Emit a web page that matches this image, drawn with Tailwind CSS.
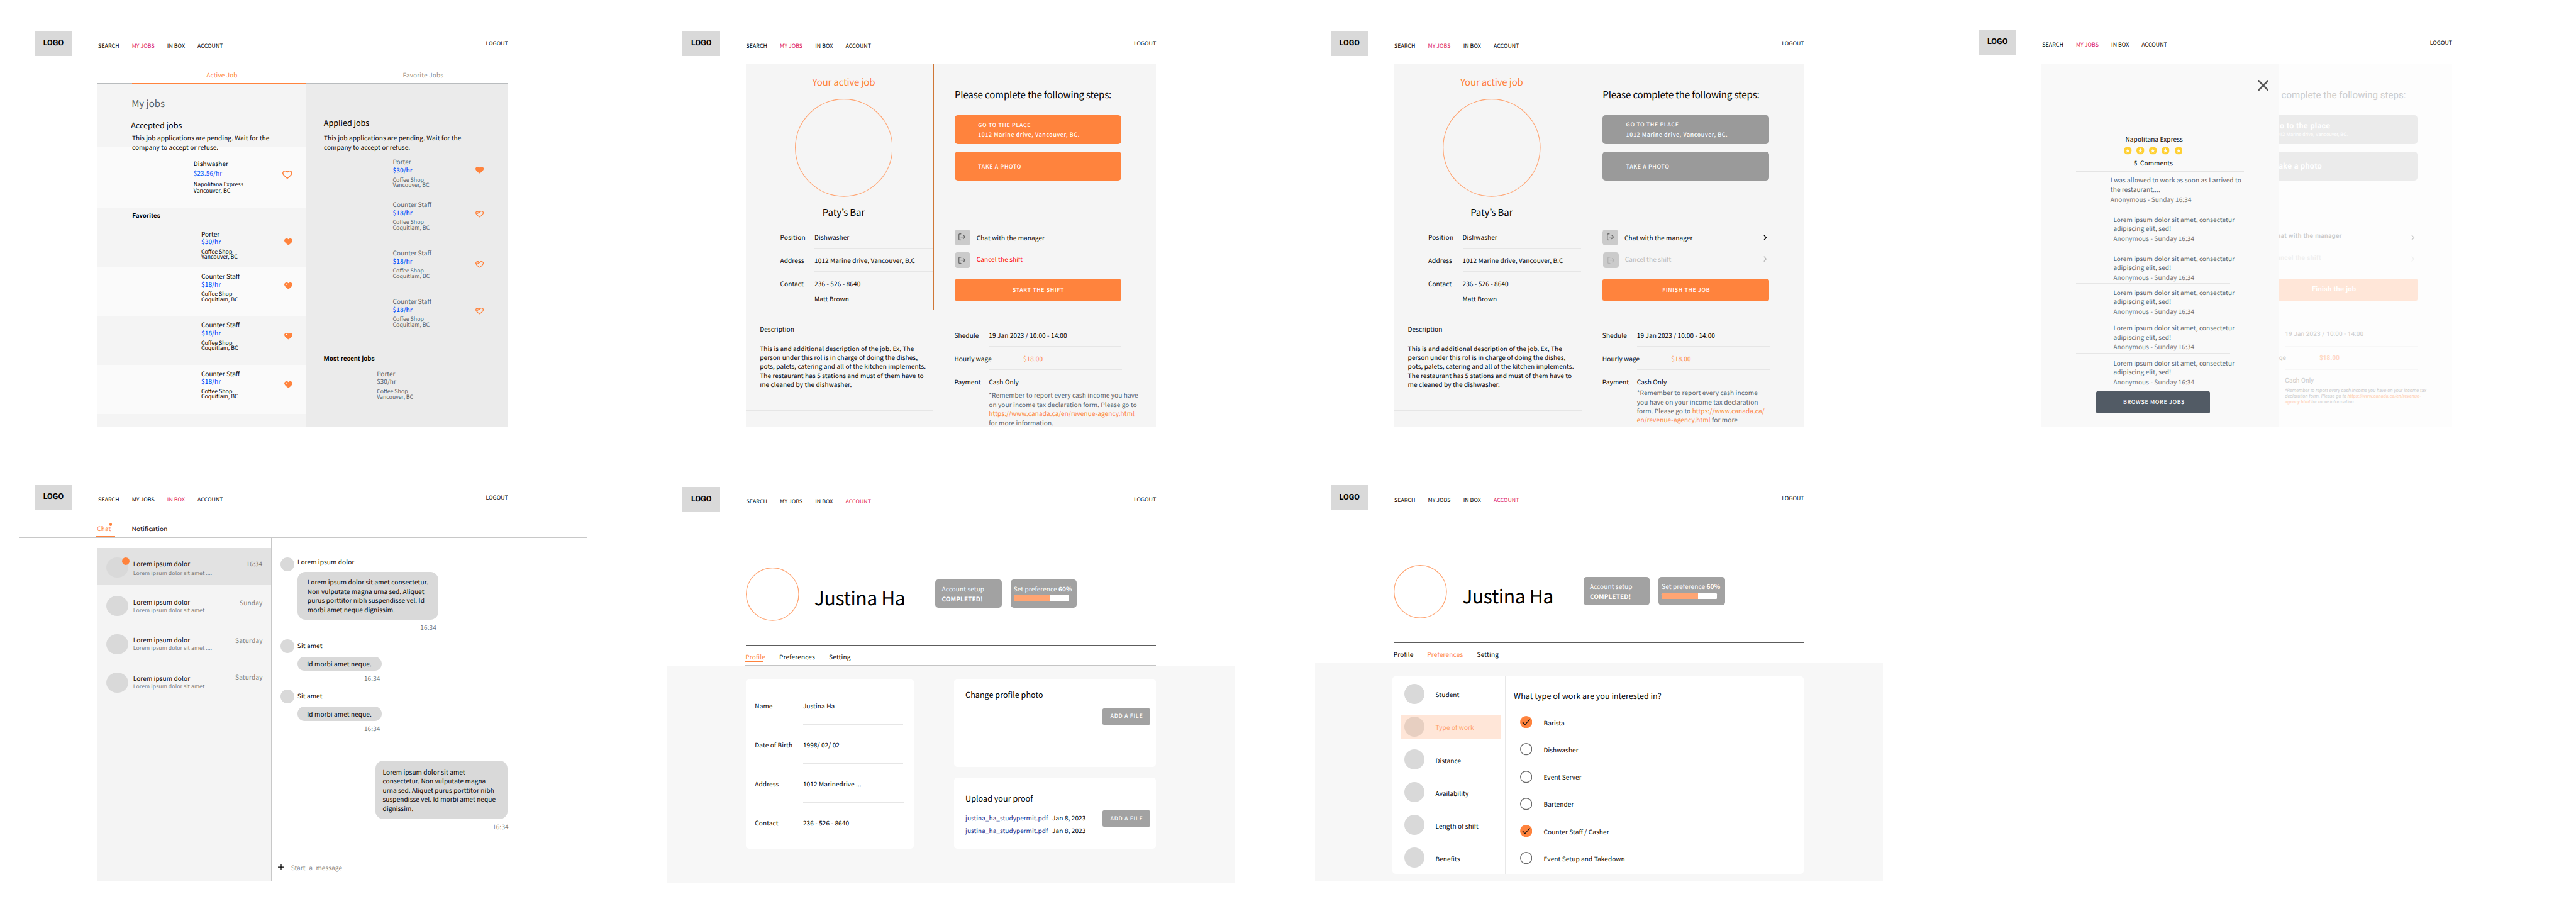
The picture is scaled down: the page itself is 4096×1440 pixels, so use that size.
<!DOCTYPE html>
<html lang="en">
<head>
<meta charset="utf-8">
<title>Job board wireframes</title>
<script src="https://cdn.jsdelivr.net/npm/@tailwindcss/browser@4"></script>
</head>
<body class="bg-white overflow-hidden">

<!-- Shared icons -->
<svg class="hidden">
  <symbol id="heart" viewBox="2 3 20 18.35" preserveAspectRatio="none"><path fill="currentColor" d="M12 21.35l-1.45-1.32C5.4 15.36 2 12.28 2 8.5 2 5.42 4.42 3 7.5 3c1.74 0 3.41.81 4.5 2.09C13.09 3.81 14.76 3 16.5 3 19.58 3 22 5.42 22 8.5c0 3.78-3.4 6.86-8.55 11.54L12 21.35z"/></symbol>
  <symbol id="heart-line" viewBox="2 3 20 18.35" preserveAspectRatio="none"><path fill="currentColor" d="M16.5 3c-1.74 0-3.41.81-4.5 2.09C10.91 3.81 9.24 3 7.5 3 4.42 3 2 5.42 2 8.5c0 3.78 3.4 6.86 8.55 11.54L12 21.35l1.45-1.32C18.6 15.36 22 12.28 22 8.5 22 5.42 19.58 3 16.5 3zm-4.4 15.55l-.1.1-.1-.1C7.14 14.24 4 11.39 4 8.5 4 6.5 5.5 5 7.5 5c1.54 0 3.04.99 3.57 2.36h1.87C13.46 5.99 14.96 5 16.5 5c2 0 3.5 1.5 3.5 3.5 0 2.89-3.14 5.74-7.9 10.05z"/></symbol>
  <symbol id="heart-notch" viewBox="2 3 20 18.35" preserveAspectRatio="none"><use href="#heart" x="2" y="3" width="20" height="18.35"/><path fill="#fff" d="M6.2 10.2V7.2a1.3 1.3 0 0 1 1.3-1.3h1.6l-.6 2z"/></symbol>
  <symbol id="heart-slash" viewBox="2 3 20 18.35" preserveAspectRatio="none"><use href="#heart-line" x="2" y="3" width="20" height="18.35"/><path fill="none" stroke="currentColor" stroke-width="2" d="M5 11.5L14.5 5.3M4.6 10.4L6.6 4.8M5 5.5l7 1"/></symbol>
  <symbol id="exit" viewBox="0 0 18 18"><path fill="none" stroke="currentColor" stroke-width="2.1" stroke-linecap="round" stroke-linejoin="round" d="M6.2 1.2H3.2a2 2 0 0 0-2 2v11.6a2 2 0 0 0 2 2h3M6.6 9h10M12.4 4.4L17 9l-4.6 4.6"/></symbol>
  <symbol id="chevron" viewBox="0 0 9 15"><path fill="none" stroke="currentColor" stroke-width="2.2" d="M1.2 1l5.8 6.5-5.8 6.5"/></symbol>
  <symbol id="star" viewBox="0 0 20 20"><circle cx="10" cy="10" r="10" fill="#ffd033"/><path fill="#fafafa" d="M10 3.9l1.5 4.3 4.500.1-3.600 2.700 1.300 4.400-3.700-2.600-3.700 2.600 1.300-4.400L4 8.300l4.500-.1z"/></symbol>
  <symbol id="radio" viewBox="0 0 31 31"><circle cx="15.5" cy="15.5" r="14.4" fill="none" stroke="#6b6b6b" stroke-width="2.2"/></symbol>
  <symbol id="tick" viewBox="0 0 31 31"><circle cx="15.5" cy="15.5" r="15.5" fill="#ff833d"/><path fill="none" stroke="#111" stroke-width="2" d="M6.5 15.5l6 6.500L24.500 8.500"/></symbol>
</svg>

<div class="[zoom:0.62755] w-[6527px] h-[2295px] overflow-hidden bg-white text-black font-['Noto_Sans_CJK_JP','Noto_Sans',sans-serif] text-[16px] leading-[23px] tracking-[0.16px] whitespace-nowrap [text-rendering:geometricPrecision] [font-feature-settings:'liga']">

<div class="flex gap-[202px] pl-[47.300px] pt-[58px]">

  <!-- My jobs -->
  <section class="w-[1440px] h-[1024px] shrink-0">
    <header class="flex h-[113px] w-[1240px] items-start pl-10 pt-5 text-[14px] leading-5 tracking-[0.060px]">
      <div class="flex h-16 w-24 items-center justify-center bg-[#d9d9d9] font-['Roboto'] text-[20px] font-bold">LOGO</div>
      <nav class="ml-[65.500px] mt-7 flex gap-8"><a>SEARCH</a><a class="text-[#dc1a60]">MY JOBS</a><a>IN BOX</a><a>ACCOUNT</a></nav>
      <a class="ml-auto mt-[23px]">LOGOUT</a>
    </header>
    <div class="ml-[200px] flex h-[41px] w-[1040px] border-b border-[#b9bcbe]">
      <div class="ml-[88px] h-[41px] w-[440px] border-b-2 border-[#ff833d] pl-[188px] pt-[7px] text-[#ff833d]">Active Job</div>
      <div class="pl-[245.500px] pt-[7px] tracking-[0.260px] text-[#8c8c8c]">Favorite Jobs</div>
    </div>
    <div class="ml-[200px] flex h-[870px] w-[1040px]">
      <div class="w-[528px] bg-[#f4f4f4]">
        <div class="h-[159px] pt-[33px]">
          <h1 class="pl-[86px] text-[24px] leading-[35px] tracking-normal text-[#525c66]">My jobs</h1>
          <h2 class="pl-[84.500px] pt-[23px] text-[20px] leading-[29px] tracking-normal">Accepted jobs</h2>
          <p class="pl-[87.300px] pt-[6px]">This job applications are pending. Wait for the<br>company to accept or refuse.</p>
        </div>
        <div class="h-[157px] bg-[#fafafa] pt-[30px]">
          <div class="flex pl-[243.200px]">
            <div class="w-[224.500px]">
              <div class="leading-6">Dishwasher</div>
              <div class="leading-6 text-[#0a58fa]">$23.56/hr</div>
              <div class="mt-[10px] text-[14px] leading-4 tracking-[0.070px]">Napolitana Express<br>Vancouver, BC</div>
            </div>
            <svg class="mt-[30.500px] h-[21.500px] w-[25px] text-[#ff833d]"><use href="#heart-line"/></svg>
          </div>
          <div class="ml-[88px] mt-[25px] w-[423px] border-b border-[#dfdfdf]"></div>
        </div>
        <div class="h-[148px] pt-[10px]">
          <h3 class="pl-[88px] font-['Roboto'] font-bold leading-5 tracking-[0.580px]">Favorites</h3>
          <div class="flex pl-[262.600px] pt-[24.600px]">
            <div class="w-[210px] leading-5 tracking-normal">Porter<div class="font-medium text-[#0a58fa]">$30/hr</div><div class="mt-2 text-[14px] leading-[14px]">Coffee Shop<br>Vancouver, BC</div></div>
            <svg class="mt-[22px] h-[17.300px] w-[21px] text-[#ff833d]"><use href="#heart"/></svg>
          </div>
        </div>
        <div class="flex h-[124px] bg-[#fafafa] pl-[262.600px] pt-[14.300px]">
          <div class="w-[210px] leading-5 tracking-normal">Counter Staff<div class="font-medium text-[#0a58fa]">$18/hr</div><div class="mt-2 text-[14px] leading-[14px]">Coffee Shop<br>Coquitlam, BC</div></div>
          <svg class="mt-[25.500px] h-[17.300px] w-[21px] text-[#ff833d]"><use href="#heart-notch"/></svg>
        </div>
        <div class="flex h-[125px] pl-[262.600px] pt-[13.400px]">
          <div class="w-[210px] leading-5 tracking-normal">Counter Staff<div class="font-medium text-[#0a58fa]">$18/hr</div><div class="mt-2 text-[14px] leading-[14px]">Coffee Shop<br>Coquitlam, BC</div></div>
          <svg class="mt-[30px] h-[17.300px] w-[21px] text-[#ff833d]"><use href="#heart-notch"/></svg>
        </div>
        <div class="flex h-[124px] bg-[#fafafa] pl-[262.600px] pt-[11.400px]">
          <div class="w-[210px] leading-5 tracking-normal">Counter Staff<div class="font-medium text-[#0a58fa]">$18/hr</div><div class="mt-2 text-[14px] leading-[14px]">Coffee Shop<br>Coquitlam, BC</div></div>
          <svg class="mt-[30px] h-[17.300px] w-[21px] text-[#ff833d]"><use href="#heart-notch"/></svg>
        </div>
      </div>
      <div class="w-[512px] bg-[#ebebeb] pt-[84.500px]">
        <h2 class="pl-[45px] text-[20px] leading-[29px] tracking-normal">Applied jobs</h2>
        <p class="pl-[45.300px] pt-[13px]">This job applications are pending. Wait for the<br>company to accept or refuse.</p>
        <div class="flex h-[123.800px] pl-[219.900px] pt-[16.200px]">
          <div class="w-[209.800px] leading-5 tracking-normal text-[#555f69]">Porter<div class="font-medium text-[#0a58fa]">$30/hr</div><div class="mt-2 text-[14px] leading-[14px]">Coffee Shop<br>Vancouver, BC</div></div>
          <svg class="mt-[22.300px] h-[17.300px] w-[21px] text-[#ff833d]"><use href="#heart"/></svg>
        </div>
        <div class="flex h-[123px] pl-[219.900px]">
          <div class="w-[209.800px] leading-5 tracking-normal text-[#555f69]">Counter Staff<div class="font-medium text-[#0a58fa]">$18/hr</div><div class="mt-2 text-[14px] leading-[14px]">Coffee Shop<br>Coquitlam, BC</div></div>
          <svg class="mt-[25.500px] h-[17.300px] w-[21px] text-[#ff833d]"><use href="#heart-slash"/></svg>
        </div>
        <div class="flex h-[123px] pl-[219.900px]">
          <div class="w-[209.800px] leading-5 tracking-normal text-[#555f69]">Counter Staff<div class="font-medium text-[#0a58fa]">$18/hr</div><div class="mt-2 text-[14px] leading-[14px]">Coffee Shop<br>Coquitlam, BC</div></div>
          <svg class="mt-[30.500px] h-[17.300px] w-[21px] text-[#ff833d]"><use href="#heart-slash"/></svg>
        </div>
        <div class="flex h-[146.600px] pl-[219.900px]">
          <div class="w-[209.800px] leading-5 tracking-normal text-[#555f69]">Counter Staff<div class="font-medium text-[#0a58fa]">$18/hr</div><div class="mt-2 text-[14px] leading-[14px]">Coffee Shop<br>Coquitlam, BC</div></div>
          <svg class="mt-[25.500px] h-[17.300px] w-[21px] text-[#ff833d]"><use href="#heart-slash"/></svg>
        </div>
        <h3 class="pl-[45px] font-['Roboto'] font-bold leading-5 tracking-[0.560px]">Most recent jobs</h3>
        <div class="pl-[179.600px] pt-4 leading-5 tracking-normal text-[#555f69]">Porter<div>$30/hr</div><div class="mt-2 text-[14px] leading-[14px]">Coffee Shop<br>Vancouver, BC</div></div>
      </div>
    </div>
  </section>

  <!-- Active job: before the shift -->
  <section class="w-[1440px] h-[1024px] shrink-0">
    <header class="flex h-[104px] w-[1240px] items-start pl-10 pt-5 text-[14px] leading-5 tracking-[0.060px]">
      <div class="flex h-16 w-24 items-center justify-center bg-[#d9d9d9] font-['Roboto'] text-[20px] font-bold">LOGO</div>
      <nav class="ml-[65.500px] mt-7 flex gap-8"><a>SEARCH</a><a class="text-[#dc1a60]">MY JOBS</a><a>IN BOX</a><a>ACCOUNT</a></nav>
      <a class="ml-auto mt-[23px]">LOGOUT</a>
    </header>
    <div class="ml-[200px] h-[920px] w-[1040px] overflow-hidden bg-[#f5f5f5]">
      <div class="flex h-[408px] border-b border-[#e6e6e6]">
        <div class="-mb-px flex w-[477px] flex-col items-center border-r-2 border-[#cf7636] pl-[21.500px] pt-[28.500px]">
          <h1 class="text-[24px] leading-[35px] tracking-[-0.300px] text-[#ff833d]">Your active job</h1>
          <svg class="mt-[24.800px] size-[248px]" viewBox="0 0 248 248"><circle cx="124" cy="124" r="123" fill="none" stroke="#ffa573" stroke-width="2"/></svg>
          <div class="mt-[23.500px] text-[24px] leading-[35px] tracking-[-0.200px]">Paty’s Bar</div>
        </div>
        <div class="pl-[52.600px] pt-[61.600px]">
          <h2 class="text-[24px] leading-[35px] tracking-[-0.240px]">Please complete the following steps:</h2>
          <div class="-ml-[0.600px] mt-[33.600px] h-[72px] w-[423px] rounded-lg bg-[#ff833d] pl-[60px] pt-[14.500px] text-[14px] font-medium leading-[23px] tracking-[1.020px] text-white">GO TO THE PLACE<br>1012 Marine drive, Vancouver, BC.</div>
          <div class="-ml-[0.600px] mt-[20.600px] h-[72px] w-[423px] rounded-lg bg-[#ff833d] pl-[60px] pt-[27.500px] text-[14px] font-medium leading-5 tracking-[1.020px] text-white">TAKE A PHOTO</div>
        </div>
      </div>
      <div class="flex h-[216px] border-b border-[#e4e4e4]">
        <div class="w-[477px] border-r-2 border-[#cf7636] pl-[87.500px]">
          <div class="flex"><div class="w-[87px] pt-5 tracking-[0.400px]">Position</div><div class="h-[59px] grow border-b border-[#e6e6e6] pt-5">Dishwasher</div></div>
          <div class="flex"><div class="w-[87px] pt-5">Address</div><div class="h-[59px] grow border-b border-[#e6e6e6] pt-5">1012 Marine drive, Vancouver, B.C</div></div>
          <div class="flex"><div class="w-[87px] pt-5">Contact</div><div class="pt-5">236 - 526 - 8640<div class="pt-[15.500px]">Matt Brown</div></div></div>
        </div>
        <div class="pl-[52px] pt-[11px]">
          <div class="flex items-center gap-4"><div class="flex size-10 items-center justify-center rounded-[7px] bg-[#cbcbcb] text-[#696969]"><svg class="size-[18px]"><use href="#exit"/></svg></div><div class="pt-[2.500px]">Chat with the manager</div></div>
          <div class="mt-[17.500px] flex items-center gap-4"><div class="flex size-10 items-center justify-center rounded-[7px] bg-[#cbcbcb] text-[#696969]"><svg class="size-[18px]"><use href="#exit"/></svg></div><div class="pb-[2px] text-[#ff0000]">Cancel the shift</div></div>
          <div class="mt-[28.700px] flex h-[55px] w-[423px] items-center justify-center rounded bg-[#ff833d] pl-0.5 text-[14px] font-medium leading-5 tracking-[1.020px] text-white">START THE SHIFT</div>
        </div>
      </div>
      <div class="flex h-[296px]">
        <div class="w-[477px]">
          <div class="pl-9 pt-[37px]">Description<p class="pt-[25px]">This is and additional description of the job. Ex, The<br>person under this rol is in charge of doing the dishes,<br>pots, palets, catering and all of the kitchen implements.<br>The restaurant has 5 stations and must of them have to<br>me cleaned by the dishwasher.</p></div>
          <div class="mt-[53px] w-[476px] border-b border-[#e6e6e6]"></div>
        </div>
        <div class="pl-[51.800px]">
          <div class="flex"><div class="w-[87.500px] pt-[52.600px]">Shedule</div><div class="h-[92px] w-[336px] border-b border-[#e6e6e6] pt-[52.600px]">19 Jan 2023 / 10:00 - 14:00</div></div>
          <div class="flex"><div class="w-[87.500px] pt-[19.700px]">Hourly wage</div><div class="h-[59px] w-[337px] border-b border-[#e6e6e6] pl-[87px] pt-[19.700px] text-[#ff833d]">$18.00</div></div>
          <div class="flex"><div class="w-[87.500px] pt-[19.300px]">Payment</div><div class="pt-[19.300px]">Cash Only<p class="pt-[10.800px] text-[#555f69]">*Remember to report every cash income you have<br>on your income tax declaration form. Please go to<br><span class="text-[#ff833d]">https://www.canada.ca/en/revenue-agency.html</span><br>for more information.</p></div></div>
        </div>
      </div>
    </div>
  </section>

  <!-- Active job: shift in progress -->
  <section class="w-[1440px] h-[1024px] shrink-0">
    <header class="flex h-[104px] w-[1240px] items-start pl-10 pt-5 text-[14px] leading-5 tracking-[0.060px]">
      <div class="flex h-16 w-24 items-center justify-center bg-[#d9d9d9] font-['Roboto'] text-[20px] font-bold">LOGO</div>
      <nav class="ml-[65.500px] mt-7 flex gap-8"><a>SEARCH</a><a class="text-[#dc1a60]">MY JOBS</a><a>IN BOX</a><a>ACCOUNT</a></nav>
      <a class="ml-auto mt-[23px]">LOGOUT</a>
    </header>
    <div class="ml-[200px] h-[920px] w-[1040px] overflow-hidden bg-[#f5f5f5]">
      <div class="flex h-[408px] border-b border-[#e6e6e6]">
        <div class="flex w-[477px] flex-col items-center pl-[19.500px] pt-[28.500px]">
          <h1 class="text-[24px] leading-[35px] tracking-[-0.300px] text-[#ff833d]">Your active job</h1>
          <svg class="mt-[24.800px] size-[248px]" viewBox="0 0 248 248"><circle cx="124" cy="124" r="123" fill="none" stroke="#ffa573" stroke-width="2"/></svg>
          <div class="mt-[23.500px] text-[24px] leading-[35px] tracking-[-0.200px]">Paty’s Bar</div>
        </div>
        <div class="pl-[52.600px] pt-[61.600px]">
          <h2 class="text-[24px] leading-[35px] tracking-[-0.240px]">Please complete the following steps:</h2>
          <div class="-ml-[0.600px] mt-[33.600px] h-[72px] w-[423px] rounded-lg bg-[#9a9a9a] pl-[60px] pt-[10.800px] text-[14px] font-medium leading-[25px] tracking-[1.020px] text-white">GO TO THE PLACE<br>1012 Marine drive, Vancouver, BC.</div>
          <div class="-ml-[0.600px] mt-[20.600px] h-[72px] w-[423px] rounded-lg bg-[#9a9a9a] pl-[60px] pt-[27.500px] text-[14px] font-medium leading-5 tracking-[1.020px] text-white">TAKE A PHOTO</div>
        </div>
      </div>
      <div class="flex h-[216px] border-b border-[#e4e4e4]">
        <div class="w-[477px] pl-[87.500px] pr-[2px]">
          <div class="flex"><div class="w-[87px] pt-5 tracking-[0.400px]">Position</div><div class="h-[59px] grow border-b border-[#e6e6e6] pt-5">Dishwasher</div></div>
          <div class="flex"><div class="w-[87px] pt-5">Address</div><div class="h-[59px] grow border-b border-[#e6e6e6] pt-5">1012 Marine drive, Vancouver, B.C</div></div>
          <div class="flex"><div class="w-[87px] pt-5">Contact</div><div class="pt-5">236 - 526 - 8640<div class="pt-[15.500px]">Matt Brown</div></div></div>
        </div>
        <div class="w-[475px] pl-[52px] pt-[11px]">
          <div class="flex items-center"><div class="flex size-10 items-center justify-center rounded-[7px] bg-[#cbcbcb] text-[#696969]"><svg class="size-[18px]"><use href="#exit"/></svg></div><div class="ml-4 pt-[2.500px]">Chat with the manager</div><svg class="ml-auto mr-[5.500px] mt-0.5 h-[15px] w-[9px]"><use href="#chevron"/></svg></div>
          <div class="ml-px mt-[17.500px] flex items-center"><div class="flex size-10 items-center justify-center rounded-[7px] bg-[#cbcbcb] text-[#b2b2b2]"><svg class="size-[18px]"><use href="#exit"/></svg></div><div class="ml-4 pb-[2px] text-[#b8b8b8]">Cancel the shift</div><svg class="mb-1 ml-auto mr-[6.500px] h-[15px] w-[9px] text-[#b8b8b8]"><use href="#chevron"/></svg></div>
          <div class="mt-[28.700px] flex h-[55px] w-[423px] items-center justify-center rounded bg-[#ff833d] pl-0.5 text-[14px] font-medium leading-5 tracking-[1.020px] text-white">FINISH THE JOB</div>
        </div>
      </div>
      <div class="flex h-[296px]">
        <div class="w-[477px]">
          <div class="pl-9 pt-[37px]">Description<p class="pt-[25px]">This is and additional description of the job. Ex, The<br>person under this rol is in charge of doing the dishes,<br>pots, palets, catering and all of the kitchen implements.<br>The restaurant has 5 stations and must of them have to<br>me cleaned by the dishwasher.</p></div>
          <div class="mt-[53px] w-[476px] border-b border-[#e6e6e6]"></div>
        </div>
        <div class="pl-[51.800px]">
          <div class="flex"><div class="w-[87.500px] pt-[52.600px]">Shedule</div><div class="h-[92px] w-[336px] border-b border-[#e6e6e6] pt-[52.600px]">19 Jan 2023 / 10:00 - 14:00</div></div>
          <div class="flex"><div class="w-[87.500px] pt-[19.700px]">Hourly wage</div><div class="h-[59px] w-[337px] border-b border-[#e6e6e6] pl-[87px] pt-[19.700px] text-[#ff833d]">$18.00</div></div>
          <div class="flex"><div class="w-[87.500px] pt-[19.300px]">Payment</div><div class="pt-[19.300px]">Cash Only<p class="pt-[4.100px] text-[#555f69]">*Remember to report every cash income<br>you have on your income tax declaration<br>form. Please go to <span class="text-[#ff833d]">https://www.canada.ca/</span><br><span class="text-[#ff833d]">en/revenue-agency.html</span> for more<br>information.</p></div></div>
        </div>
      </div>
    </div>
  </section>

  <!-- Reviews dialog over the faded active job -->
  <section class="w-[1440px] h-[1024px] shrink-0">
    <header class="flex h-[104px] w-[1240px] items-start pl-10 pt-[18px] text-[14px] leading-5 tracking-[0.060px]">
      <div class="flex h-16 w-24 items-center justify-center bg-[#d9d9d9] font-['Roboto'] text-[20px] font-bold">LOGO</div>
      <nav class="ml-[65.500px] mt-7 flex gap-8"><a>SEARCH</a><a class="text-[#dc1a60]">MY JOBS</a><a>IN BOX</a><a>ACCOUNT</a></nav>
      <a class="ml-auto mt-[23px]">LOGOUT</a>
    </header>
    <div class="relative ml-[200px] h-[920px] w-[1040px] bg-[#fdfdfd]">
      <div class="font-['Roboto'] text-[#cccccc]">
        <div class="h-[408px] border-b border-[#f9f9f9] pl-[529px] pt-[62px]">
          <h2 class="text-[24px] leading-[35px] tracking-[0.060px]">Please complete the following steps:</h2>
          <div class="mt-[33.200px] h-[72px] w-[423px] rounded-lg bg-[#ebebeb] pl-[60px] pt-[15px] text-[20px] font-bold leading-6 tracking-[0.500px] text-white">Go to the place<div class="text-[12px] font-normal leading-[18px] tracking-[0.200px] underline">1012 Marine drive, Vancouver, BC.</div></div>
          <div class="mt-[20.600px] h-[72px] w-[423px] rounded-lg bg-[#ebebeb] pl-[60px] pt-[25px] text-[20px] font-bold leading-6 tracking-[0.500px] text-white">Take a photo</div>
        </div>
        <div class="h-[216px] w-[952px] pl-[529px] pt-[18.500px] font-bold tracking-[0.650px]">
          <div class="flex items-center justify-between pl-[56px] pr-[6px]"><span>Chat with the manager</span><svg class="mt-[3px] h-[15px] w-[9px]"><use href="#chevron"/></svg></div>
          <div class="mt-[32.500px] flex items-center justify-between pl-[56px] pr-[7px] text-[#f0f0f0]"><span>Cancel the shift</span><svg class="h-[15px] w-[9px]"><use href="#chevron"/></svg></div>
          <div class="mt-[39.500px] flex h-[55px] w-[423px] items-center justify-center rounded bg-[#ffe6d8] text-[18px] tracking-[0.250px] text-white">Finish the job</div>
        </div>
        <div class="pl-[529px]">
          <div class="flex"><div class="w-[87.500px] pt-[51px]">Shedule</div><div class="h-[92px] w-[336px] border-b border-[#f7f7f7] pt-[51px]">19 Jan 2023 / 10:00 - 14:00</div></div>
          <div class="flex"><div class="w-[87.500px] pt-[19px]">Hourly wage</div><div class="h-[59px] w-[337px] border-b border-[#f7f7f7] pl-[87px] pt-[19px] font-bold text-[#ffd9c5]">$18.00</div></div>
          <div class="flex"><div class="w-[87.500px] pt-[17px]">Payment</div><div class="pt-[17px]">Cash Only<p class="pt-[6.500px] text-[12px] italic leading-[14.200px] tracking-normal">*Remember to report every cash income you have on your income tax<br>declaration form. Please go to <b class="text-[#ffd9c5]">https://www.canada.ca/en/revenue-<br>agency.html</b> for more information.</p></div></div>
        </div>
      </div>

      <div class="absolute left-0 top-[-1.700px] h-[919.500px] w-[599.500px] bg-[#f9f9f9]">
        <div class="flex justify-end pr-[24.800px] pt-[42.700px]"><svg class="size-[28px]" viewBox="0 0 28 28"><path d="M2 2l24 24M26 2L2 26" stroke="#575757" stroke-width="4.200" stroke-linecap="square"/></svg></div>
        <div class="mt-[110px] pl-[212px]">Napolitana Express</div>
        <div class="ml-[208.500px] mt-[7.900px] flex gap-3">
          <svg class="size-5"><use href="#star"/></svg><svg class="size-5"><use href="#star"/></svg><svg class="size-5"><use href="#star"/></svg><svg class="size-5"><use href="#star"/></svg><svg class="size-5"><use href="#star"/></svg>
        </div>
        <div class="mt-[10px] whitespace-pre pl-[233px]">5  Comments</div>
        <div class="ml-[86.700px] w-[425px] border-b border-[#e4e4e4] pt-[8px]"></div>
        <div class="h-[91px] pl-[174.300px] pt-[11px] text-[#555f69]">I was allowed to work as soon as I arrived to<br>the restaurant....<div class="pt-[2px] text-[#757575]">Anonymous - Sunday 16:34</div></div>
        <div class="ml-[86.700px] w-[390px] border-b border-[#e6e6e6]"></div>
        <div class="h-[103px] pl-[181.600px] pt-[18px] text-[#555f69]">Lorem ipsum dolor sit amet, consectetur<br>adipiscing elit, sed!<div class="pt-[2px] text-[#757575]">Anonymous - Sunday 16:34</div></div>
        <div class="ml-[86.700px] w-[390px] border-b border-[#e6e6e6]"></div>
        <div class="h-[85.500px] pl-[181.600px] pt-[11.500px] text-[#555f69]">Lorem ipsum dolor sit amet, consectetur<br>adipiscing elit, sed!<div class="pt-[2px] text-[#757575]">Anonymous - Sunday 16:34</div></div>
        <div class="ml-[86.700px] w-[390px] border-b border-[#e6e6e6]"></div>
        <div class="h-[86px] pl-[181.600px] pt-[10.700px] text-[#555f69]">Lorem ipsum dolor sit amet, consectetur<br>adipiscing elit, sed!<div class="pt-[2px] text-[#757575]">Anonymous - Sunday 16:34</div></div>
        <div class="ml-[86.700px] w-[390px] border-b border-[#e6e6e6]"></div>
        <div class="h-[88px] pl-[181.600px] pt-[13px] text-[#555f69]">Lorem ipsum dolor sit amet, consectetur<br>adipiscing elit, sed!<div class="pt-[2px] text-[#757575]">Anonymous - Sunday 16:34</div></div>
        <div class="ml-[86.700px] w-[390px] border-b border-[#e6e6e6]"></div>
        <div class="h-[95.500px] pl-[181.600px] pt-[12.500px] text-[#555f69]">Lorem ipsum dolor sit amet, consectetur<br>adipiscing elit, sed!<div class="pt-[2px] text-[#757575]">Anonymous - Sunday 16:34</div></div>
        <div class="ml-[138.300px] flex h-[55px] w-[288.500px] items-center justify-center rounded bg-[#525b65] pl-1 text-[14px] font-medium leading-5 tracking-[1.020px] text-white">BROWSE MORE JOBS</div>
      </div>
    </div>
  </section>
</div>

<div class="flex items-start gap-[202px] pl-[47.300px] pt-[126px]">

  <!-- Inbox -->
  <section class="w-[1440px] h-[1024px] shrink-0">
    <header class="flex h-[111px] w-[1240px] items-start pl-10 pt-5 text-[14px] leading-5 tracking-[0.060px]">
      <div class="flex h-16 w-24 items-center justify-center bg-[#d9d9d9] font-['Roboto'] text-[20px] font-bold">LOGO</div>
      <nav class="ml-[65.500px] mt-7 flex gap-8"><a>SEARCH</a><a>MY JOBS</a><a class="text-[#dc1a60]">IN BOX</a><a>ACCOUNT</a></nav>
      <a class="ml-auto mt-[23px]">LOGOUT</a>
    </header>
    <div class="flex h-[43px] border-b border-[#c8c8c8] pl-[197px]">
      <div class="relative w-12 border-b-[3.200px] border-[#ff833d] pl-[1.500px] pt-[9px] text-[#ff833d]">Chat<span class="absolute left-[33px] top-[6px] size-[6.500px] rounded-full bg-[#ff833d]"></span></div>
      <div class="pl-[41.500px] pt-[9px] tracking-[0.320px]">Notification</div>
    </div>
    <div class="flex h-[869px]">
      <div class="w-[641px] border-r border-[#c8c8c8] pl-[200px] pt-[25.300px]">
        <div class="h-full bg-[#f4f4f4]">
          <div class="flex h-[94px] bg-[#e2e2e2] pl-[22.700px] pt-[25px]">
            <div class="relative h-[51.300px] w-[55px] rounded-[50%] bg-[#d9d9d9]"><span class="absolute left-[39px] top-[-0.700px] size-5 rounded-full bg-[#ff833d]"></span></div>
            <div class="ml-[12.500px] mt-[3.600px]">Lorem ipsum dolor<div class="pt-[3.500px] text-[14px] leading-5 tracking-[0.070px] text-[#7a7a7a]">Lorem ipsum dolor sit amet ....</div></div>
            <div class="ml-auto mr-[22px] mt-[5px] text-[#7a7a7a]">16:34</div>
          </div>
          <div class="flex h-[97px] pl-[22.700px] pt-[27.800px]">
            <div class="h-[51.300px] w-[55px] rounded-[50%] bg-[#d9d9d9]"></div>
            <div class="ml-[12.500px] mt-[4.300px]">Lorem ipsum dolor<div class="-mt-px text-[14px] leading-5 tracking-[0.070px] text-[#7a7a7a]">Lorem ipsum dolor sit amet ....</div></div>
            <div class="ml-auto mr-[21.500px] mt-[5.600px] tracking-[0.300px] text-[#7a7a7a]">Sunday</div>
          </div>
          <div class="flex h-[97px] pl-[22.700px] pt-[27.800px]">
            <div class="h-[51.300px] w-[55px] rounded-[50%] bg-[#d9d9d9]"></div>
            <div class="ml-[12.500px] mt-[4px]">Lorem ipsum dolor<div class="-mt-px text-[14px] leading-5 tracking-[0.070px] text-[#7a7a7a]">Lorem ipsum dolor sit amet ....</div></div>
            <div class="ml-auto mr-[21px] mt-[5.300px] tracking-[0.300px] text-[#7a7a7a]">Saturday</div>
          </div>
          <div class="flex h-[97px] pl-[22.700px] pt-[27.800px]">
            <div class="h-[51.300px] w-[55px] rounded-[50%] bg-[#d9d9d9]"></div>
            <div class="ml-[12.500px] mt-[4.300px]">Lorem ipsum dolor<div class="-mt-px text-[14px] leading-5 tracking-[0.070px] text-[#7a7a7a]">Lorem ipsum dolor sit amet ....</div></div>
            <div class="ml-auto mr-[21px] mt-[1px] tracking-[0.300px] text-[#7a7a7a]">Saturday</div>
          </div>
        </div>
      </div>
      <div class="w-[799px] pt-[50.300px]">
        <div class="h-[207.500px] pl-[23px]">
          <div class="flex"><div class="h-[34.700px] w-[34.700px] rounded-full bg-[#d9d9d9]"></div><div class="ml-[7.800px]">Lorem ipsum dolor</div></div>
          <div class="ml-[42.700px] mt-[1px] h-[121px] w-[356.600px] rounded-[20px] bg-[#d9d9d9] pl-[25px] pt-[15.200px]">Lorem ipsum dolor sit amet consectetur.<br>Non vulputate magna urna sed. Aliquet<br>purus porttitor nibh suspendisse vel. Id<br>morbi amet neque dignissim.</div>
          <div class="w-[394.500px] pt-[8.200px] text-right text-[#7a7a7a]">16:34</div>
        </div>
        <div class="h-[127.100px] pl-[23px]">
          <div class="flex"><div class="h-[34.700px] w-[34.700px] rounded-full bg-[#d9d9d9]"></div><div class="ml-[7.500px] mt-[4.300px]">Sit amet</div></div>
          <div class="ml-[42.700px] mt-[8.600px] h-9 w-[213px] rounded-[18px] bg-[#d9d9d9] pl-[24.200px] pt-[7px]">Id morbi amet neque.</div>
          <div class="w-[252px] pt-[8.200px] text-right text-[#7a7a7a]">16:34</div>
        </div>
        <div class="h-[179.300px] pl-[23px]">
          <div class="flex"><div class="h-[34.700px] w-[34.700px] rounded-full bg-[#d9d9d9]"></div><div class="ml-[7.500px] mt-[4.300px]">Sit amet</div></div>
          <div class="ml-[42.700px] mt-[8.600px] h-9 w-[213px] rounded-[18px] bg-[#d9d9d9] pl-[24.200px] pt-[7px]">Id morbi amet neque.</div>
          <div class="w-[252px] pt-[8.200px] text-right text-[#7a7a7a]">16:34</div>
        </div>
        <div class="h-[235.800px] pl-[262.500px]">
          <div class="h-[148.700px] w-[336px] rounded-[20px] bg-[#d9d9d9] pl-[19px] pt-[17.800px]">Lorem ipsum dolor sit amet<br>consectetur. Non vulputate magna<br>urna sed. Aliquet purus porttitor nibh<br>suspendisse vel. Id morbi amet neque<br>dignissim.</div>
          <div class="w-[338px] pt-[8.400px] text-right text-[#7a7a7a]">16:34</div>
        </div>
        <div class="flex border-t border-[#c8c8c8] pl-[16.500px] pt-[23px]">
          <svg class="mt-[2px] size-4" viewBox="0 0 16 16"><path d="M8 0v16M0 8h16" stroke="#000" stroke-width="2"/></svg>
          <div class="ml-[16.500px] text-[#858585] [word-spacing:5px]">Start a message</div>
        </div>
      </div>
    </div>
  </section>

  <!-- Account: profile -->
  <section class="mt-[5px] w-[1440px] h-[1024px] shrink-0">
    <header class="flex h-[104px] w-[1240px] items-start pl-10 pt-5 text-[14px] leading-5 tracking-[0.060px]">
      <div class="flex h-16 w-24 items-center justify-center bg-[#d9d9d9] font-['Roboto'] text-[20px] font-bold">LOGO</div>
      <nav class="ml-[65.500px] mt-7 flex gap-8"><a>SEARCH</a><a>MY JOBS</a><a>IN BOX</a><a class="text-[#dc1a60]">ACCOUNT</a></nav>
      <a class="ml-auto mt-[23px]">LOGOUT</a>
    </header>
    <div class="ml-[200px] flex h-[318px] w-[1040px] items-start border-b border-[#5c5c5c]">
      <svg class="mt-[120.300px] size-[135px] shrink-0" viewBox="0 0 135 135"><circle cx="67.500" cy="67.500" r="66.500" fill="none" stroke="#ffa573" stroke-width="2"/></svg>
      <div class="ml-[39px] mt-[162.400px] w-[307px] text-[48px] leading-[70px] tracking-[-0.600px]">Justina Ha</div>
      <div class="mt-[150.700px] h-[72px] w-[168px] rounded-lg bg-[#a2a2a2] pl-4 pt-[11.400px] leading-[25px] text-white">Account setup<br><b>COMPLETED!</b></div>
      <div class="ml-[22px] mt-[150.700px] h-[72px] w-[168px] rounded-lg bg-[#a2a2a2] pl-[8px] pt-[13.100px] text-white">Set preference <b>60%</b>
        <div class="mt-[4.500px] h-[15.500px] w-[140px] overflow-hidden rounded-[2px] bg-white"><div class="h-full w-[93px] bg-[#ffa573]"></div></div>
      </div>
    </div>
    <div class="ml-[198px] flex h-[51px] w-[1042px] border-b border-[#c4c4c4] pl-[1.500px] pt-[16.800px]">
      <a class="h-[24px] w-[45px] border-b-[1.500px] border-[#ff833d] tracking-[0.300px] text-[#ff833d]">Profile</a>
      <a class="ml-[40.500px] tracking-[0.280px]">Preferences</a>
      <a class="ml-[35.500px] tracking-[0.280px]">Setting</a>
    </div>
    <div class="flex h-[551px] items-start bg-[#f7f7f7] pl-[200px] pt-[34px]">
      <div class="h-[430px] w-[426px] rounded-lg bg-white pl-[23.500px]">
        <div class="flex"><div class="w-[121.500px] pt-[57px]">Name</div><div class="h-[116px] w-[254px] border-b border-[#e6e6e6] pl-[0.500px] pt-[57px]">Justina Ha</div></div>
        <div class="flex"><div class="w-[121.500px] pt-[39.700px]">Date of Birth</div><div class="h-[99px] w-[254px] border-b border-[#e6e6e6] pl-[0.500px] pt-[39.700px]">1998/ 02/ 02</div></div>
        <div class="flex"><div class="w-[121.500px] pt-[40px]">Address</div><div class="h-[99px] w-[255px] border-b border-[#e6e6e6] pl-[0.500px] pt-[40px]">1012 Marinedrive ...</div></div>
        <div class="flex"><div class="w-[122px] pt-[39.700px]">Contact</div><div class="pt-[39.700px]">236 - 526 - 8640</div></div>
      </div>
      <div class="ml-[102.500px] w-[511px]">
        <div class="h-[223px] rounded-lg bg-white pl-[28.500px] pr-[15px] pt-[25.200px]">
          <h2 class="text-[20px] leading-[29px] tracking-[0.060px]">Change profile photo</h2>
          <div class="ml-auto mt-5 flex h-[41px] w-[120px] items-center justify-center rounded bg-[#a2a2a2] pl-0.5 text-[14px] font-medium leading-5 tracking-[1.100px] text-white">ADD A FILE</div>
        </div>
        <div class="mt-[27px] h-[180px] rounded-lg bg-white pl-[28.500px] pr-[15px] pt-[38.200px]">
          <h2 class="text-[20px] leading-[29px] tracking-[0.060px]">Upload your proof</h2>
          <div class="flex items-start">
            <div class="pt-[19px] leading-[31px] tracking-[0.040px] text-[#12308f]">justina_ha_studypermit.pdf<br>justina_ha_studypermit.pdf</div>
            <div class="ml-[11px] pt-[19px] leading-[31px]">Jan 8, 2023<br>Jan 8, 2023</div>
            <div class="ml-auto mt-4 flex h-[41px] w-[120px] items-center justify-center rounded bg-[#a2a2a2] pl-0.5 text-[14px] font-medium leading-5 tracking-[1.100px] text-white">ADD A FILE</div>
          </div>
        </div>
      </div>
    </div>
  </section>

  <!-- Account: preferences -->
  <section class="mt-px w-[1440px] h-[1024px] shrink-0">
    <header class="flex h-[102px] w-[1240px] items-start pl-10 pt-5 text-[14px] leading-5 tracking-[0.060px]">
      <div class="flex h-16 w-24 items-center justify-center bg-[#d9d9d9] font-['Roboto'] text-[20px] font-bold">LOGO</div>
      <nav class="ml-[65.500px] mt-7 flex gap-8"><a>SEARCH</a><a>MY JOBS</a><a>IN BOX</a><a class="text-[#dc1a60]">ACCOUNT</a></nav>
      <a class="ml-auto mt-[23px]">LOGOUT</a>
    </header>
    <div class="ml-[200px] flex h-[318px] w-[1040px] items-start border-b border-[#5c5c5c]">
      <svg class="mt-[120.300px] size-[135px] shrink-0" viewBox="0 0 135 135"><circle cx="67.500" cy="67.500" r="66.500" fill="none" stroke="#ffa573" stroke-width="2"/></svg>
      <div class="ml-[39px] mt-[162.400px] w-[307px] text-[48px] leading-[70px] tracking-[-0.600px]">Justina Ha</div>
      <div class="mt-[150.700px] h-[72px] w-[168px] rounded-lg bg-[#a2a2a2] pl-4 pt-[11.400px] leading-[25px] text-white">Account setup<br><b>COMPLETED!</b></div>
      <div class="ml-[22px] mt-[150.700px] h-[72px] w-[168px] rounded-lg bg-[#a2a2a2] pl-[8px] pt-[13.100px] text-white">Set preference <b>60%</b>
        <div class="mt-[4.500px] h-[15.500px] w-[140px] overflow-hidden rounded-[2px] bg-white"><div class="h-full w-[93px] bg-[#ffa573]"></div></div>
      </div>
    </div>
    <div class="ml-[198px] flex h-[51px] w-[1042px] border-b border-[#c4c4c4] pl-[1.500px] pt-[16.800px]">
      <a class="w-[45px] tracking-[0.300px]">Profile</a>
      <a class="ml-[40.500px] h-[23.500px] border-b-[1.500px] border-[#ff833d] tracking-[0.280px] text-[#ff833d]">Preferences</a>
      <a class="ml-[35.500px] tracking-[0.280px]">Setting</a>
    </div>
    <div class="h-[550.500px] bg-[#f7f7f7] pl-[197px] pt-[33.800px]">
      <div class="flex h-[499px] w-[1042.500px] rounded-lg bg-white">
        <div class="w-[287px] border-r border-[#e8e8e8] pt-3">
          <div class="flex h-[63px] items-center pl-[29.500px]"><div class="size-[51px] rounded-full bg-[#d9d9d9]"></div><div class="ml-[28.500px] pt-[6px]">Student</div></div>
          <div class="ml-5 mt-[21px] flex h-[63px] w-[255px] items-center rounded-md bg-[#ffe6d8] pb-0.5 pl-[9.500px]"><div class="size-[51px] rounded-full bg-[#e7cfc1]"></div><div class="ml-[28.500px] pt-[6px] text-[#ffa06a]">Type of work</div></div>
          <div class="mt-[19px] flex h-[63px] items-center pl-[29.500px]"><div class="size-[51px] rounded-full bg-[#d9d9d9]"></div><div class="ml-[28.500px] pt-[6px]">Distance</div></div>
          <div class="mt-5 flex h-[63px] items-center pl-[29.500px]"><div class="size-[51px] rounded-full bg-[#d9d9d9]"></div><div class="ml-[28.500px] pt-[6px]">Availability</div></div>
          <div class="mt-5 flex h-[63px] items-center pl-[29.500px]"><div class="size-[51px] rounded-full bg-[#d9d9d9]"></div><div class="ml-[28.500px] pt-[6px]">Length of shift</div></div>
          <div class="mt-5 flex h-[63px] items-center pl-[29.500px]"><div class="size-[51px] rounded-full bg-[#d9d9d9]"></div><div class="ml-[28.500px] pt-[6px]">Benefits</div></div>
        </div>
        <div class="pl-[20.500px] pt-[34px]">
          <h2 class="text-[20px] leading-[29px] tracking-[0.040px]">What type of work are you interested in?</h2>
          <div class="flex flex-col gap-[38px] pl-[15.500px] pt-[36.700px]">
            <div class="flex h-[31px] items-center"><svg class="size-[31px]"><use href="#tick"/></svg><div class="ml-[29px] pt-[6px]">Barista</div></div>
            <div class="flex h-[31px] items-center"><svg class="size-[31px]"><use href="#radio"/></svg><div class="ml-[29px] pt-[4px]">Dishwasher</div></div>
            <div class="flex h-[31px] items-center"><svg class="size-[31px]"><use href="#radio"/></svg><div class="ml-[29px] pt-[3px]">Event Server</div></div>
            <div class="flex h-[31px] items-center"><svg class="size-[31px]"><use href="#radio"/></svg><div class="ml-[29px] pt-[3px]">Bartender</div></div>
            <div class="flex h-[31px] items-center"><svg class="size-[31px]"><use href="#tick"/></svg><div class="ml-[29px] pt-[5px]">Counter Staff / Casher</div></div>
            <div class="flex h-[31px] items-center"><svg class="size-[31px]"><use href="#radio"/></svg><div class="ml-[29px] pt-[3px]">Event Setup and Takedown</div></div>
          </div>
        </div>
      </div>
    </div>
  </section>
</div>
</div>
</body>
</html>
